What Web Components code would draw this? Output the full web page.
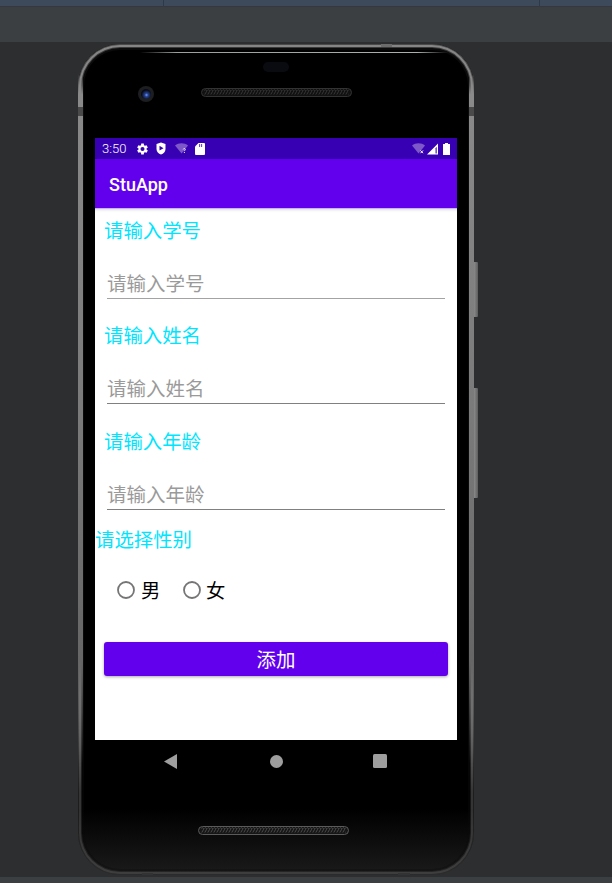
<!DOCTYPE html>
<html><head><meta charset="utf-8"><style>
html,body{margin:0;padding:0;background:#2d2e30;}
body{width:612px;height:883px;overflow:hidden;}
</style></head><body>
<ide-shell>
<device-frame>
<status-bar slot="status"></status-bar>
<app-bar slot="screen">StuApp</app-bar>
<form-body slot="screen">
  <form-field label="请输入学号" hint="请输入学号" line="#a3a3a3"></form-field>
  <form-field label="请输入姓名" hint="请输入姓名" line="#808080"></form-field>
  <form-field label="请输入年龄" hint="请输入年龄" line="#808080"></form-field>
  <gender-group></gender-group>
  <add-button>添加</add-button>
</form-body>
<nav-bar slot="nav"></nav-bar>
</device-frame>
</ide-shell>
<script>
const CJK='"Noto Sans CJK SC","Noto Sans",sans-serif';
function def(name,html){
  customElements.define(name,class extends HTMLElement{
    connectedCallback(){
      if(this.shadowRoot)return;
      const r=this.attachShadow({mode:'open'});
      r.innerHTML=typeof html==='function'?html(this):html;
    }
  });
}
def('ide-shell',`<style>
:host{display:flex;flex-direction:column;width:612px;height:883px;background:#2d2e30;overflow:hidden}
.tabs{height:6px;background:#3c4a5c;display:grid;grid-template-columns:164px 376px 1fr;flex:none}
.tabs i{border-right:1px solid #2f3a47}
.tabs i:last-child{border:0}
.sep{height:1px;background:#34393f;flex:none}
.tool{height:35px;background:#3c3f41;flex:none}
.main{height:835px;flex:none;padding:2px 0 0 78px;box-sizing:border-box}
.foot{height:6px;background:#3c3f41;flex:none}
</style>
<div class="tabs"><i></i><i></i><i></i></div><div class="sep"></div><div class="tool"></div>
<div class="main"><slot></slot></div><div class="foot"></div>`);

def('device-frame',`<style>
:host{display:block;position:relative;width:396px;height:831px}
.body{position:absolute;inset:0;border-radius:42px;background:linear-gradient(180deg,#000 0,#000 92%,#1b1b1b 100%);overflow:hidden}
.metal{position:absolute;inset:0;border-radius:42px;pointer-events:none;
 box-shadow:inset 0 0 0 1px #4a4a4a,inset 0 0 0 3px #858585,inset 0 0 0 4px #3a3a3a,inset 0 0 0 6px #0b0b0b;
 -webkit-mask:linear-gradient(#000 0,#000 78%,#0006 90%,#0005 100%);mask:linear-gradient(#000 0,#000 78%,#0006 90%,#0005 100%)}
.side{position:absolute;top:30px;height:690px;width:5px;background:linear-gradient(180deg,#0000 0,#8a8a8a 3%,#7a7a7a 50%,#666 85%,#0000 100%)}
.glint{position:absolute;left:62px;right:26px;top:8px;height:1px;background:linear-gradient(90deg,transparent,#9aa09e 12%,#aab0ae 90%,transparent)}
.layout{position:absolute;inset:0;display:flex;flex-direction:column;padding:94px 0 0 17px;box-sizing:border-box}
.screen{width:362px;height:602px;background:#fff;display:flex;flex-direction:column;flex:none}
.btn{position:absolute;left:396px;width:4px;background:linear-gradient(90deg,#8a8a8a,#5e5e5e);border-radius:0 1px 1px 0}
.pill{position:absolute;left:185px;top:18px;width:26px;height:10px;border-radius:5px;background:#0a0b10}
.cam{position:absolute;left:60px;top:42px;width:16px;height:16px}
.spk{position:absolute;width:151px;height:9px}
.notch{position:absolute;background:#4a4a4a}
</style>
<div class="body"></div>
<div class="metal"></div>
<i class="side" style="left:0"></i><i class="side" style="right:0"></i>
<div class="glint"></div>
<i class="notch" style="left:0;top:63px;width:5px;height:9px"></i>
<i class="notch" style="right:0;top:63px;width:5px;height:9px"></i>
<i class="notch" style="left:303px;top:0;width:11px;height:3px;background:#6c6c6c"></i>
<i class="notch" style="left:64px;bottom:0;width:11px;height:2px;background:#333"></i>
<i class="notch" style="left:320px;bottom:0;width:12px;height:2px;background:#333"></i>
<div class="btn" style="top:218px;height:55px"></div>
<div class="btn" style="top:344px;height:110px"></div>
<div class="pill"></div>
<svg class="cam" viewBox="0 0 16 16"><defs><radialGradient id="c" cx=".55" cy=".6" r=".5"><stop offset="0" stop-color="#6f9bff"/><stop offset=".35" stop-color="#26418f"/><stop offset="1" stop-color="#070a14"/></radialGradient></defs><circle cx="8" cy="8" r="8" fill="#1d1e20"/><circle cx="8" cy="8" r="5" fill="url(#c)"/></svg>
<svg class="spk" style="left:123px;top:44px" viewBox="0 0 151 9"><defs><pattern id="s1" width="3" height="9" patternUnits="userSpaceOnUse"><path d="M.5 2.5a1.2 1.2 0 0 1 2 0M2.5 2.5v1L.8 6.5" fill="none" stroke="#3d3d3d" stroke-width=".8"/></pattern></defs><rect x=".5" y=".5" width="150" height="8" rx="4" fill="#111" stroke="#333"/><rect x="3" y="1" width="145" height="7" fill="url(#s1)"/></svg>
<svg class="spk" style="left:120px;top:782px" viewBox="0 0 151 9"><defs><pattern id="s2" width="3" height="9" patternUnits="userSpaceOnUse"><path d="M.5 2.5a1.2 1.2 0 0 1 2 0M2.5 2.5v1L.8 6.5" fill="none" stroke="#555" stroke-width=".8"/></pattern></defs><rect x=".5" y=".5" width="150" height="8" rx="4" fill="#161616" stroke="#5a5a5a"/><rect x="3" y="1" width="145" height="7" fill="url(#s2)"/></svg>
<div class="layout"><div class="screen"><slot name="status"></slot><slot name="screen"></slot></div><slot name="nav"></slot></div>`);

def('status-bar',`<style>
:host{display:flex;align-items:center;height:21px;background:#3700b3;flex:none;color:#fff;font:300 13px/21px Roboto,sans-serif;padding:0 7px;box-sizing:border-box}
span{width:31px}
svg{display:block;flex:none}
.g{flex:1}
</style><span>3:50</span>
<svg width="11" height="12" viewBox="3 2 19 20" style="margin-left:4px"><path fill="#fff" d="M19.4 13a7.5 7.5 0 0 0 0-2l2.3-1.700-2.200-3.800-2.700 1.100a7.500 7.500 0 0 0-1.700-1L14.700 2.700h-4.400l-.4 2.900a7.500 7.500 0 0 0-1.700 1L5.500 5.500 3.300 9.300 5.600 11a7.500 7.500 0 0 0 0 2l-2.300 1.700 2.200 3.800 2.700-1.100a7.500 7.500 0 0 0 1.700 1l.4 2.900h4.400l.4-2.900a7.500 7.500 0 0 0 1.700-1l2.700 1.100 2.200-3.800zM12.500 15.500a3.500 3.500 0 1 1 0-7 3.500 3.500 0 0 1 0 7z"/></svg>
<svg width="10" height="13" viewBox="1 0 10 13" style="margin-left:8px"><path fill="#fff" d="M6 .5 10.500 2v5c0 2.700-2 4.700-4.500 5.500C3.500 11.700 1.500 9.700 1.500 7V2z"/><path fill="#3700b3" d="M4.500 3.800v4.800L8.500 6.200z"/></svg>
<svg width="13" height="11" viewBox="0 0 13 11" style="margin-left:9px"><path fill="#7e57c9" d="M0 2.500C3.500-.6 9.500-.6 13 2.500L6.500 10.500z"/><path fill="none" stroke="#fff" stroke-width=".9" d="M8.200 6.400c.2-1.100 2.100-1.100 2.100.1 0 .8-1 .9-1 1.700"/><rect x="8.900" y="9" width=".9" height="1" fill="#fff"/></svg>
<svg width="10" height="12" viewBox="0 0 10 12" style="margin-left:7px"><path fill="#fff" d="M3.500 0H9a1 1 0 0 1 1 1v10a1 1 0 0 1-1 1H1a1 1 0 0 1-1-1V3.500z"/><path fill="#3700b3" d="M4.300 1h.8v3h-.8zM6.300 1h.8v3h-.8z"/></svg>
<i class="g"></i>
<svg width="13" height="11" viewBox="0 0 13 11"><path fill="#7e57c9" d="M0 2.500C3.500-.6 9.500-.6 13 2.500L6.500 10.500z"/><path stroke="#fff" stroke-width="1" d="M8.500 7.500l2.500 2.700M11 7.500l-2.500 2.700"/></svg>
<svg width="11" height="12" viewBox="0 0 12 12" style="margin-left:1.500px"><path fill="#fff" d="M12 0v12H0z"/><path fill="#3700b3" d="M10.800 3.500v7.300H9.200V5.100z" opacity=".75"/></svg>
<svg width="7" height="12" viewBox="0 0 7 12" style="margin-left:5.500px"><path fill="#fff" d="M2 0h3v1h2v11H0V1h2z"/></svg>`);

def('app-bar',`<style>
:host{display:flex;align-items:center;height:50px;background:#6200ee;color:#fff;font:500 18px Roboto,sans-serif;padding:2px 0 0 14px;box-sizing:border-box;border-bottom:1px solid #c9b2f6;flex:none}
</style><slot></slot>`);

def('form-body',`<style>
:host{display:flex;flex-direction:column;flex:1;padding-top:6px;box-shadow:inset 0 3px 3px -2px #0002;box-sizing:border-box;font-family:${CJK}}
</style><slot></slot>`);

def('form-field',h=>`<style>
:host{display:block;font-family:${CJK};font-size:19.400px}
:host(:not(:first-child)){margin-top:21.400px}
.l{height:30px;line-height:30px;color:#00e5ff;padding-left:9px}
.f{height:54px;box-sizing:border-box;margin:0 12px;border-bottom:1px solid ${h.getAttribute('line')};color:#9a9a9a;padding:25px 0 0 0;line-height:26px;white-space:nowrap;font-size:19.500px}
</style><div class="l">${h.getAttribute('label')}</div><div class="f">${h.getAttribute('hint')}</div>`);

def('gender-group',`<style>
:host{display:block;font-family:${CJK};font-size:19.400px;margin-top:14.200px}
.l{height:30px;line-height:30px;color:#00e5ff;padding-left:0}
.r{display:flex;align-items:center;height:30px;margin-top:21px;padding-left:22px;color:#000}
svg{flex:none;display:block}
span{margin-left:6px;width:42px;line-height:30px}
svg+span+svg+span{margin-left:5px}
</style><div class="l">请选择性别</div>
<div class="r"><svg width="18" height="18" viewBox="0 0 18 18"><circle cx="9" cy="9" r="8" fill="none" stroke="#757575" stroke-width="1.800"/></svg><span>男</span><svg width="18" height="18" viewBox="0 0 18 18"><circle cx="9" cy="9" r="8" fill="none" stroke="#757575" stroke-width="1.800"/></svg><span>女</span></div>`);

def('add-button',`<style>
:host{display:flex;align-items:center;justify-content:center;height:34px;margin:37px 9px 0;background:#6200ee;color:#fff;border-radius:3px;font-family:${CJK};font-size:19.500px;box-shadow:0 1px 3px #0005}
</style><slot></slot>`);

def('nav-bar',`<style>
:host{display:flex;width:362px;height:42px;align-items:center;flex:none}
svg{display:block;flex:none}
</style>
<svg width="14" height="15" viewBox="0 0 14 15" style="margin-left:69px"><path fill="#9e9e9e" d="M0 7.500 13 0v15z"/></svg>
<svg width="13" height="13" viewBox="0 0 13 13" style="margin-left:92px"><circle cx="6.500" cy="6.500" r="6.500" fill="#9e9e9e"/></svg>
<svg width="14" height="14" viewBox="0 0 14 14" style="margin-left:90px"><rect width="14" height="14" rx="1.500" fill="#9e9e9e"/></svg>`);
</script>
</body></html>
